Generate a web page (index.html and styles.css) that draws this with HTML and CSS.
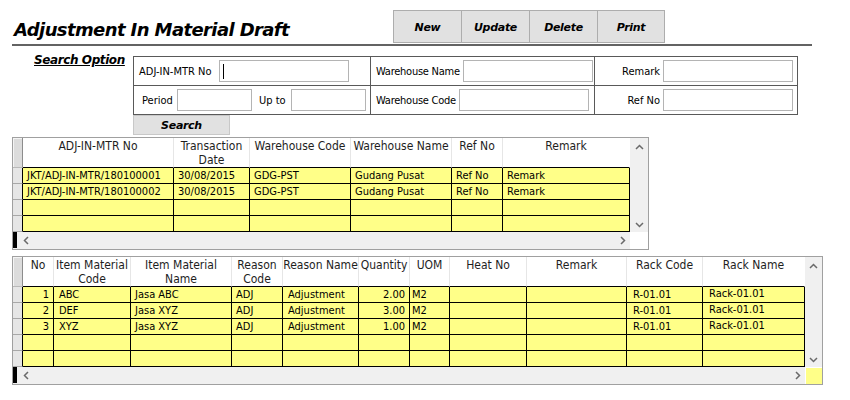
FILE: index.html
```html
<!DOCTYPE html>
<html>
<head>
<meta charset="utf-8">
<link rel="stylesheet" href="styles.css">
</head>
<body>
<div class="top">
  <h1 class="title">Adjustment In Material Draft</h1>
  <div class="toolbar">
    <div class="tbtn">New</div>
    <div class="tbtn">Update</div>
    <div class="tbtn">Delete</div>
    <div class="tbtn last">Print</div>
  </div>
</div>

<div class="search">
  <div class="search-label">Search Option</div>
  <div class="search-main">
    <div class="sbox">
      <div class="scell c1 r1"><span class="lbl w-adj">ADJ-IN-MTR No</span><span class="inp w130"><span class="caret"></span></span></div>
      <div class="scell c2 r1"><span class="lbl w-whn">Warehouse Name</span><span class="inp w130"></span></div>
      <div class="scell c3 r1"><span class="lbl right">Remark</span><span class="inp w130"></span></div>
      <div class="scell c1"><span class="lbl w-per">Period</span><span class="inp w75"></span><span class="lbl w-upto">Up to</span><span class="inp w75"></span></div>
      <div class="scell c2"><span class="lbl w-whc">Warehouse Code</span><span class="inp w130"></span></div>
      <div class="scell c3"><span class="lbl right">Ref No</span><span class="inp w130"></span></div>
    </div>
    <div class="sbtn">Search</div>
  </div>
</div>

<div class="grid g1">
  <div class="gbody">
    <table class="gt">
      <colgroup>
        <col style="width:10px"><col style="width:151px"><col style="width:76px"><col style="width:101px"><col style="width:101px"><col style="width:51px"><col style="width:127px">
      </colgroup>
      <thead>
        <tr><th class="rh"></th><th>ADJ-IN-MTR No</th><th>Transaction Date</th><th>Warehouse Code</th><th>Warehouse Name</th><th>Ref No</th><th class="lastc">Remark</th></tr>
      </thead>
      <tbody>
        <tr><td class="rh"></td><td>JKT/ADJ-IN-MTR/180100001</td><td>30/08/2015</td><td>GDG-PST</td><td>Gudang Pusat</td><td>Ref No</td><td>Remark</td></tr>
        <tr><td class="rh"></td><td>JKT/ADJ-IN-MTR/180100002</td><td>30/08/2015</td><td>GDG-PST</td><td>Gudang Pusat</td><td>Ref No</td><td>Remark</td></tr>
        <tr><td class="rh"></td><td></td><td></td><td></td><td></td><td></td><td></td></tr>
        <tr><td class="rh"></td><td></td><td></td><td></td><td></td><td></td><td></td></tr>
      </tbody>
    </table>
  </div>
  <div class="vscroll">
    <svg class="chev" width="9" height="6" viewBox="0 0 9 6"><polyline points="1,5 4.5,1.5 8,5"/></svg>
    <svg class="chev" width="9" height="6" viewBox="0 0 9 6"><polyline points="1,1 4.5,4.5 8,1"/></svg>
  </div>
  <div class="hscroll">
    <span class="hmark"></span>
    <svg class="chev" width="6" height="9" viewBox="0 0 6 9"><polyline points="5,1 1.5,4.5 5,8"/></svg>
    <span class="hfill"></span>
    <svg class="chev" width="6" height="9" viewBox="0 0 6 9"><polyline points="1,1 4.5,4.5 1,8"/></svg>
  </div>
  <div class="corner"></div>
</div>

<div class="grid g2">
  <div class="gbody">
    <table class="gt">
      <colgroup>
        <col style="width:10px"><col style="width:31px"><col style="width:77px"><col style="width:101px"><col style="width:51px"><col style="width:76px"><col style="width:51px"><col style="width:40px"><col style="width:77px"><col style="width:100px"><col style="width:76px"><col style="width:102px">
      </colgroup>
      <thead>
        <tr><th class="rh"></th><th>No</th><th>Item Material Code</th><th>Item Material Name</th><th>Reason Code</th><th class="nw">Reason Name</th><th>Quantity</th><th>UOM</th><th>Heat No</th><th>Remark</th><th>Rack Code</th><th class="lastc">Rack Name</th></tr>
      </thead>
      <tbody>
        <tr><td class="rh"></td><td class="num">1</td><td class="p5">ABC</td><td>Jasa ABC</td><td>ADJ</td><td class="p5">Adjustment</td><td class="num">2.00</td><td class="p2">M2</td><td></td><td></td><td class="low">R-01.01</td><td class="high">Rack-01.01</td></tr>
        <tr><td class="rh"></td><td class="num">2</td><td class="p5">DEF</td><td>Jasa XYZ</td><td>ADJ</td><td class="p5">Adjustment</td><td class="num">3.00</td><td class="p2">M2</td><td></td><td></td><td class="low">R-01.01</td><td class="high">Rack-01.01</td></tr>
        <tr><td class="rh"></td><td class="num">3</td><td class="p5">XYZ</td><td>Jasa XYZ</td><td>ADJ</td><td class="p5">Adjustment</td><td class="num">1.00</td><td class="p2">M2</td><td></td><td></td><td class="low">R-01.01</td><td class="high">Rack-01.01</td></tr>
        <tr><td class="rh"></td><td></td><td></td><td></td><td></td><td></td><td></td><td></td><td></td><td></td><td></td><td></td></tr>
        <tr><td class="rh"></td><td></td><td></td><td></td><td></td><td></td><td></td><td></td><td></td><td></td><td></td><td></td></tr>
      </tbody>
    </table>
  </div>
  <div class="vscroll">
    <svg class="chev" width="9" height="6" viewBox="0 0 9 6"><polyline points="1,5 4.5,1.5 8,5"/></svg>
    <svg class="chev" width="9" height="6" viewBox="0 0 9 6"><polyline points="1,1 4.5,4.5 8,1"/></svg>
  </div>
  <div class="hscroll">
    <span class="hmark"></span>
    <svg class="chev" width="6" height="9" viewBox="0 0 6 9"><polyline points="5,1 1.5,4.5 5,8"/></svg>
    <span class="hfill"></span>
    <svg class="chev" width="6" height="9" viewBox="0 0 6 9"><polyline points="1,1 4.5,4.5 1,8"/></svg>
  </div>
  <div class="corner yellow"></div>
</div>
</body>
</html>
```

FILE: styles.css
```css
* { box-sizing: border-box; }
html, body { margin: 0; padding: 0; background: #fff; }
body {
  width: 850px;
  height: 400px;
  overflow: hidden;
  font-family: "DejaVu Sans Condensed", "Liberation Sans", sans-serif;
  font-size: 11px;
  color: #000;
}

/* ---------- top bar ---------- */
.top {
  margin-left: 12px;
  width: 800px;
  height: 46px;
  border-bottom: 2px solid #636363;
  display: grid;
  grid-template-columns: 381px auto;
  align-items: end;
}
.title {
  margin: 0 0 3px 2px;
  font-family: "DejaVu Sans", sans-serif;
  font-size: 18px;
  line-height: 22px;
  font-weight: bold;
  font-style: italic;
  letter-spacing: -0.6px;
}
.toolbar {
  display: flex;
  margin-bottom: 1px;
}
.tbtn {
  width: 68px;
  height: 33px;
  background: #e1e1e1;
  border: 1px solid #adadad;
  border-right: none;
  display: flex;
  align-items: center;
  justify-content: center;
  font-family: "DejaVu Sans", sans-serif;
  font-weight: bold;
  font-style: italic;
  font-size: 11px;
  letter-spacing: -0.3px;
  padding-top: 2px;
}
.tbtn.last { border-right: 1px solid #adadad; }

/* ---------- search ---------- */
.search {
  display: flex;
  margin-top: 7px;
}
.search-label {
  width: 133px;
  padding-left: 34px;
  font-family: "DejaVu Sans", sans-serif;
  font-weight: bold;
  font-style: italic;
  font-size: 12px;
  line-height: 14px;
  letter-spacing: -0.4px;
  text-decoration: underline;
}
.search-main { margin-top: 3px; }
.sbox {
  display: grid;
  grid-template-columns: 237px 224px 202px;
  grid-template-rows: 29px 28px;
  border: 1px solid #595959;
  width: 665px;
}
.scell {
  display: flex;
  align-items: center;
  font-size: 11px;
}
.scell.r1 { border-bottom: 1px solid #595959; }
.scell.c1, .scell.c2 { border-right: 1px solid #595959; }
.c1.r1 { padding-left: 5px; }
.c1 { padding-left: 8px; }
.c2 { padding-left: 5px; }
.lbl { white-space: nowrap; flex: none; }
.w-adj { width: 80px; }
.w-per { width: 35px; }
.w-upto { width: 32px; margin-left: 7px; }
.w-whn { width: 87px; letter-spacing: -0.25px; }
.w-whc { width: 83px; letter-spacing: -0.25px; }
.lbl.right { width: 65px; text-align: right; margin-right: 3px; }
.inp {
  display: block;
  position: relative;
  flex: none;
  height: 22px;
  border: 1px solid #b4b4b4;
  background: #fff;
}
.w130 { width: 130px; }
.w75 { width: 75px; }
.caret {
  position: absolute;
  left: 3px;
  top: 3px;
  width: 1px;
  height: 15px;
  background: #000;
}
.sbtn {
  width: 97px;
  height: 20px;
  background: #e1e1e1;
  border: 1px solid #c8c8c8;
  display: flex;
  align-items: center;
  justify-content: center;
  font-family: "DejaVu Sans", sans-serif;
  font-weight: bold;
  font-style: italic;
  font-size: 11px;
  letter-spacing: -0.3px;
}

/* ---------- grids ---------- */
.grid {
  display: grid;
  margin-left: 12px;
  width: max-content;
  border: 1px solid #a0a0a0;
}
.g1 {
  margin-top: 2px;
  grid-template-columns: 617px 18px;
}
.g2 {
  margin-top: 6px;
  grid-template-columns: 792px 17px;
}
.gt {
  border-collapse: separate;
  border-spacing: 0;
  table-layout: fixed;
  width: 100%;
}
.gt th {
  height: 30px;
  padding: 1px 1px 0;
  vertical-align: top;
  text-align: center;
  font-weight: normal;
  font-size: 12px;
  line-height: 14px;
  color: #1e1e1e;
  background: #fff;
  border-right: 1px solid #e6e6e6;
  border-bottom: 1px solid #000;
}
.gt th.nw { white-space: nowrap; padding: 1px 0 0; }
.gt th.lastc { border-right: 1px solid #fff; }
.gt th.rh {
  background: #dcdcdc;
  border-right: 1px solid #8c8c8c;
  border-bottom: 1px solid #b9b9b9;
  box-shadow: inset 1px 1px 0 #f4f4f4;
}
.gt td {
  height: 16px;
  padding: 0 2px 0 4px;
  line-height: 15px;
  white-space: nowrap;
  overflow: hidden;
  background: #ffff88;
  border-right: 1px solid #000;
  border-bottom: 1px solid #000;
}
.gt td.rh {
  background: #e6e6e6;
  border-right: 1px solid #000;
  border-bottom: 1px solid #a8a8a8;
  padding: 0;
}
.gt td.num { text-align: right; padding-right: 4px; padding-left: 0; }
.gt td.p5 { padding-left: 5px; }
.gt td.p2 { padding-left: 2px; }
.gt td.low { padding-left: 6px; padding-top: 1px; line-height: 14px; }
.gt td.high { padding-left: 6px; line-height: 13px; vertical-align: top; }

.vscroll {
  background: #f0f0f0;
  display: flex;
  flex-direction: column;
  justify-content: space-between;
  align-items: center;
  padding: 6px 0 4px;
}
.hscroll {
  background: #f0f0f0;
  height: 17px;
  display: flex;
  align-items: center;
  padding-right: 4px;
}
.hmark {
  width: 4px;
  height: 16px;
  background: #000;
  align-self: flex-start;
  margin-right: 6px;
}
.hfill { flex: 1; }
.corner { background: #fff; }
.corner.yellow { background: #ffff88; margin: 1px 0 0 1px; }
.chev polyline {
  fill: none;
  stroke: #6a6a6a;
  stroke-width: 1.5;
}
```
